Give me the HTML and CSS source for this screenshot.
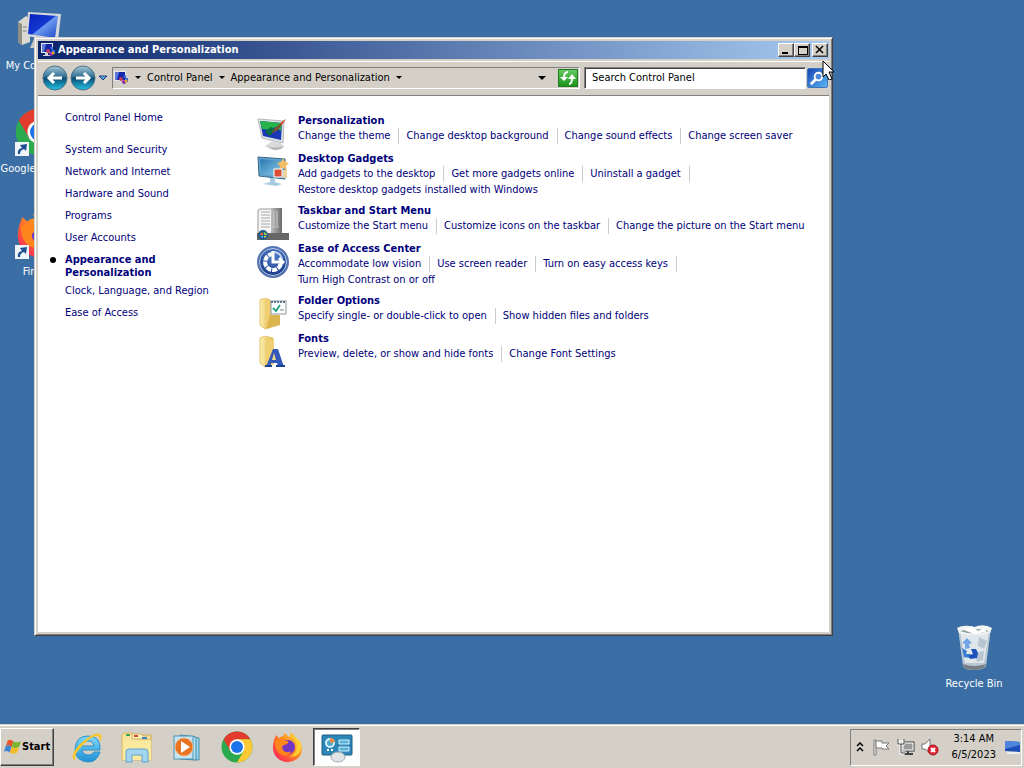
FILE: index.html
```html
<!DOCTYPE html>
<html lang="en">
<head>
<meta charset="utf-8">
<title>Appearance and Personalization</title>
<link rel="stylesheet" href="styles.css">
</head>
<body>
<svg class="defs" aria-hidden="true">
  <defs>
    <linearGradient id="screen" x1="0" y1="0" x2="1" y2="1"><stop offset="0" stop-color="#0a1fb8"/><stop offset=".48" stop-color="#1238d0"/><stop offset=".52" stop-color="#6b98ee"/><stop offset="1" stop-color="#1a49c8"/></linearGradient>
    <linearGradient id="orb" x1="0" y1="0" x2="0" y2="1"><stop offset="0" stop-color="#a9c8d6"/><stop offset=".45" stop-color="#2f6f93"/><stop offset=".5" stop-color="#0c4a72"/><stop offset="1" stop-color="#22c4e6"/></linearGradient>
    <linearGradient id="folder" x1="0" y1="0" x2="1" y2="0"><stop offset="0" stop-color="#fdf0b0"/><stop offset="1" stop-color="#e3bd55"/></linearGradient>
    <linearGradient id="sky" x1="0" y1="0" x2="1" y2="1"><stop offset="0" stop-color="#2a78b0"/><stop offset="1" stop-color="#8fd0ee"/></linearGradient>
    <linearGradient id="fox" x1="1" y1="0" x2="0" y2="1"><stop offset="0" stop-color="#ffe84a"/><stop offset=".45" stop-color="#ff8a1f"/><stop offset=".8" stop-color="#ff3a4c"/><stop offset="1" stop-color="#e0167c"/></linearGradient>
    <linearGradient id="ie" x1="0" y1="0" x2="0" y2="1"><stop offset="0" stop-color="#7fd9fb"/><stop offset="1" stop-color="#1f8fd6"/></linearGradient>
    <linearGradient id="grey" x1="0" y1="0" x2="1" y2="0"><stop offset="0" stop-color="#bdbdbd"/><stop offset="1" stop-color="#6a6a6a"/></linearGradient>
    <radialGradient id="access" cx=".5" cy=".3" r=".7"><stop offset="0" stop-color="#5580cc"/><stop offset="1" stop-color="#123582"/></radialGradient>
    <symbol id="chrome" viewBox="0 0 32 32">
      <circle cx="16" cy="16" r="15.500" fill="#2da94f"/>
      <path d="M2.600 8.250A15.500 15.500 0 0 1 29.400 8.250L16 8.250L9.300 19.900Z" fill="#e33b2e"/>
      <path d="M29.400 8.250A15.500 15.500 0 0 1 16 31.500L22.700 19.900L16 8.250Z" fill="#fcc934"/>
      <circle cx="16" cy="16" r="7.700" fill="#fff"/><circle cx="16" cy="16" r="6" fill="#1a73e8"/>
    </symbol>
    <symbol id="firefox" viewBox="0 0 32 32">
      <path d="M3 9L5 4L8 7Q10 5 13 5L12 2Q16 3 18 6Q20 4 19 1Q24 4 26 8Q29 9 30 13Q33 22 26 28Q18 34 9 29Q-1 23 3 9Z" fill="url(#fox)"/>
      <circle cx="17" cy="16" r="7" fill="#7236c4"/>
      <path d="M4 10Q9 7 13 10L17 10Q18 13 13 14Q10 15 12 19Q15 23 20 20Q17 26 11 24Q4 21 4 10Z" fill="#ff861c"/>
      <path d="M19 4Q28 10 25 20Q22 25 18 26Q31 26 30 13Q27 7 19 4Z" fill="#ffcf35"/>
    </symbol>
    <symbol id="shortcut" viewBox="0 0 14 14">
      <rect width="14" height="14" fill="#eef4fa"/><path d="M3 12Q2 7 7 6L5 3L12 2L11 9L9 7Q5 8 5 12Z" fill="#1d4f91"/>
    </symbol>
    <symbol id="panel" viewBox="0 0 16 16">
      <rect x="1" y="1" width="12" height="10" fill="#e7e9ef"/><rect x="2" y="2" width="10" height="8" fill="#1427a4"/><path d="M2 2H6L4 10H2Z" fill="#5a79dc"/>
      <path d="M5 11H8V13H11V14H3V13H5Z" fill="#d2d4da"/><circle cx="8" cy="9" r="2" fill="#c03a5a"/><circle cx="11" cy="12" r="2" fill="#8a2bb0"/><path d="M10 5H13V8H15V12H13L12 9Z" fill="#3b67de"/><circle cx="13" cy="11" r="1.500" fill="#e6a91e"/>
    </symbol>
  </defs>
</svg>

<main class="desktop">
  <div class="shortcuts">
    <button class="shortcut">
      <svg class="shortcut-icon" viewBox="0 0 48 48"><path d="M3 17L11 11L15 14V37L7 40L3 37Z" fill="#dcdad0"/><path d="M3 17L7 19V40L3 37Z" fill="#8f8f88"/><path d="M8 22H13M8 26H13" stroke="#777"/><path d="M13 7L46 9L43 36L11 31Z" fill="#d5d8dc"/><path d="M15 9L43 11L40 33L13 29Z" fill="url(#screen)"/><path d="M19 34L30 36L33 43H15Z" fill="#c8c9c6"/></svg>
      <span>My Computer</span>
    </button>
    <button class="shortcut">
      <span class="badged"><svg class="shortcut-icon" viewBox="0 0 48 48"><use href="#chrome" width="48" height="48"/></svg><svg class="badge"><use href="#shortcut"/></svg></span>
      <span>Google Chrome</span>
    </button>
    <button class="shortcut">
      <span class="badged"><svg class="shortcut-icon" viewBox="0 0 48 48"><use href="#firefox" width="48" height="48"/></svg><svg class="badge"><use href="#shortcut"/></svg></span>
      <span>Firefox</span>
    </button>
  </div>

  <button class="shortcut bin">
    <svg class="shortcut-icon" viewBox="0 0 48 48"><path d="M8 5L41 5L36 43Q34 47 24 47Q14 47 13 43Z" fill="#b9c7d2"/><path d="M10 8L39 8L34 40H15Z" fill="#dfe7ed"/><path d="M7 5Q14 1 24 4Q34 0 42 5L40 10Q24 14 9 10Z" fill="#f1f5f4"/><path d="M10 8Q24 4 39 8Q24 13 10 8Z" fill="#8f9d9f"/><path d="M14 7L22 3L28 8L35 5L36 9L24 11Z" fill="#fff"/><path d="M29 14L37 18L34 26L28 23ZM24 30L34 28L33 37L27 39Z" fill="#b7c6d0"/><path d="M12 20L17 15L22 20L19 21L20 25L15 26L15 21Z" fill="#73a5e2"/><path d="M12 25L17 28L16 31L20 31V35L14 34Z" fill="#387acf"/><path d="M21 26L26 26L28 30L27 35L20 36L19 32L23 31Z" fill="#1c51bb"/><path d="M13 41Q24 45 36 41L34 45Q24 49 14 45Z" fill="#777f84"/></svg>
    <span>Recycle Bin</span>
  </button>

  <section class="window" aria-label="Appearance and Personalization">
    <header class="titlebar">
      <svg class="small-icon"><use href="#panel"/></svg>
      <h1>Appearance and Personalization</h1>
      <div class="caption-buttons">
        <button aria-label="Minimize"><svg viewBox="0 0 12 10"><path d="M2 8H8" stroke="#000" stroke-width="2"/></svg></button>
        <button aria-label="Maximize"><svg viewBox="0 0 12 10"><path d="M2 1H11V9H2ZM2 2H11" fill="none" stroke="#000" shape-rendering="crispEdges"/></svg></button>
        <button class="close" aria-label="Close"><svg viewBox="0 0 12 10"><path d="M2 1L9 8M9 1L2 8" stroke="#000" stroke-width="1.500"/></svg></button>
      </div>
    </header>

    <nav class="toolbar" aria-label="Location">
      <div class="history">
        <button aria-label="Back"><svg class="orb" viewBox="0 0 26 26"><circle cx="13" cy="13" r="12" fill="url(#orb)" stroke="#4d7184"/><path d="M20 13H7M12 8L7 13L12 18" fill="none" stroke="#fff" stroke-width="3"/></svg></button>
        <button aria-label="Forward"><svg class="orb" viewBox="0 0 26 26"><circle cx="13" cy="13" r="12" fill="url(#orb)" stroke="#4d7184"/><path d="M6 13H19M14 8L19 13L14 18" fill="none" stroke="#fff" stroke-width="3"/></svg></button>
        <button aria-label="Recent pages"><svg class="recent" viewBox="0 0 10 8"><path d="M1 2H9L5 6Z" fill="#55a4dc" stroke="#203f7c"/></svg></button>
      </div>
      <div class="address">
        <svg class="small-icon"><use href="#panel"/></svg>
        <button class="crumb-arrow" aria-label="Locations"><i></i></button>
        <button class="crumb">Control Panel</button>
        <button class="crumb-arrow" aria-label="Control Panel items"><i></i></button>
        <button class="crumb">Appearance and Personalization</button>
        <button class="crumb-arrow" aria-label="Category items"><i></i></button>
        <button class="crumb-arrow history-list" aria-label="Previous locations"><i class="large"></i></button>
        <button class="refresh" aria-label="Refresh"><svg viewBox="0 0 18 16"><path d="M9 2Q5 2 5 8M10 14Q13 14 13 8" fill="none" stroke="#fff" stroke-width="2"/><path d="M1 7H9L5 11ZM9 9H17L13 4Z" fill="#fff"/></svg></button>
      </div>
      <div class="search">
        <input type="text" placeholder="Search Control Panel" aria-label="Search Control Panel">
        <button aria-label="Search"><svg viewBox="0 0 20 20"><circle cx="11" cy="8" r="4" fill="#4b86dd" stroke="#fff" stroke-width="2"/><path d="M8 11L3 16" stroke="#fff" stroke-width="3"/></svg></button>
      </div>
    </nav>

    <div class="content">
      <nav class="categories" aria-label="Categories">
        <a class="home" href="#">Control Panel Home</a>
        <a href="#">System and Security</a>
        <a href="#">Network and Internet</a>
        <a href="#">Hardware and Sound</a>
        <a href="#">Programs</a>
        <a href="#">User Accounts</a>
        <a class="current" href="#" aria-current="page">Appearance and Personalization</a>
        <a href="#">Clock, Language, and Region</a>
        <a href="#">Ease of Access</a>
      </nav>

      <div class="groups">
        <section class="group">
          <svg viewBox="0 0 32 32"><path d="M1 1L27 3L26 25L5 20Z" fill="#dfe2e3" stroke="#b4b8ba"/><path d="M3 3L25 5L24 22L6 18Z" fill="#1838b8"/><path d="M3 3L25 5L24 13L18 9L14 12L5 11Z" fill="#27b34a"/><path d="M8 14L14 9L18 11L13 18Z" fill="#0a6c42"/><path d="M29 1L18 10L14 16L21 12Z" fill="#80522d"/><path d="M29 1L23 5L25 7Z" fill="#df5039"/><path d="M16 23L22 24L27 28Q24 32 17 32L8 28Z" fill="#d9dadb"/><path d="M8 28Q18 31 27 28Q25 32 17 32Z" fill="#b5b7b9"/></svg>
          <div class="tasks"><h2><a href="#">Personalization</a></h2>
            <ul><li><a href="#">Change the theme</a></li><li><a href="#">Change desktop background</a></li><li><a href="#">Change sound effects</a></li><li><a href="#">Change screen saver</a></li></ul></div>
        </section>
        <section class="group">
          <svg viewBox="0 0 32 32"><path d="M1 1L28 3V23L2 20Z" fill="#63a3cc" stroke="#346b8b"/><path d="M3 3L26 5V20L4 18Z" fill="url(#sky)"/><path d="M13 22H18V26L25 28L19 30L6 28L13 26Z" fill="#a7cee0"/><path d="M26 2L28 6L32 7L29 10L30 14L26 12L22 14L23 10L20 7L24 6Z" fill="#f3bd63"/><rect x="17" y="13" width="8" height="8" fill="#da4d32" stroke="#fff"/><rect x="26" y="14" width="4" height="8" fill="#ead5a1"/></svg>
          <div class="tasks"><h2><a href="#">Desktop Gadgets</a></h2>
            <ul><li><a href="#">Add gadgets to the desktop</a></li><li><a href="#">Get more gadgets online</a></li><li><a href="#">Uninstall a gadget</a></li><li><a href="#">Restore desktop gadgets installed with Windows</a></li></ul></div>
        </section>
        <section class="group">
          <svg viewBox="0 0 32 32"><rect x="1" y="1" width="15" height="25" rx="2" fill="#f5f5f5" stroke="#999"/><path d="M4 4H13M4 7H13M4 10H13M4 13H13M4 16H13M4 19H13" stroke="#aaa"/><rect x="14" width="11" height="26" fill="url(#grey)"/><path d="M17 3V18M20 3V18M15 19H22" stroke="#ccc"/><rect y="25" width="32" height="7" fill="#666"/><circle cx="6" cy="27" r="5" fill="#1d5989"/><path d="M3 26L6 24V27H3Z" fill="#ef6533"/><path d="M7 24L10 26V27H7Z" fill="#9fcf45"/><path d="M3 28H6V30Z" fill="#5bc0f0"/><path d="M7 28H10L7 30Z" fill="#ffd34d"/></svg>
          <div class="tasks"><h2><a href="#">Taskbar and Start Menu</a></h2>
            <ul><li><a href="#">Customize the Start menu</a></li><li><a href="#">Customize icons on the taskbar</a></li><li><a href="#">Change the picture on the Start menu</a></li></ul></div>
        </section>
        <section class="group">
          <svg viewBox="0 0 32 32"><circle cx="16" cy="16" r="15" fill="url(#access)" stroke="#5474b0" stroke-width="2"/><circle cx="16" cy="16" r="13.500" fill="none" stroke="#c2d2ef"/><path d="M16 8A8 8 0 1 0 24 17" fill="none" stroke="#fff" stroke-width="4" stroke-dasharray="5 1"/><path d="M17 6A9 9 0 0 1 25 13" fill="none" stroke="#b9cdf0" stroke-width="2"/><path d="M16 5V16H26M22 12L26 16L22 20" fill="none" stroke="#fff" stroke-width="3"/></svg>
          <div class="tasks"><h2><a href="#">Ease of Access Center</a></h2>
            <ul><li><a href="#">Accommodate low vision</a></li><li><a href="#">Use screen reader</a></li><li><a href="#">Turn on easy access keys</a></li><li><a href="#">Turn High Contrast on or off</a></li></ul></div>
        </section>
        <section class="group">
          <svg viewBox="0 0 32 32"><path d="M3 2L8 0L13 2V28L8 31L3 27Z" fill="url(#folder)" stroke="#e0c56e"/><path d="M8 2L14 4V30L8 31Z" fill="#efcf72"/><path d="M13 17H23V27L9 31Z" fill="#ddb54f"/><rect x="14" y="3" width="15" height="13" fill="#fff" stroke="#8b969f"/><path d="M14 4H29" stroke="#607b8f" stroke-width="2" stroke-dasharray="2 1"/><path d="M16 10L19 13L23 7" fill="none" stroke="#26a383" stroke-width="2"/><path d="M23 12H27" stroke="#888"/></svg>
          <div class="tasks"><h2><a href="#">Folder Options</a></h2>
            <ul><li><a href="#">Specify single- or double-click to open</a></li><li><a href="#">Show hidden files and folders</a></li></ul></div>
        </section>
        <section class="group">
          <svg viewBox="0 0 32 32"><path d="M3 2L8 0L16 2V28L8 31L3 27Z" fill="url(#folder)" stroke="#e0c56e"/><path d="M8 2L17 4V28L8 31Z" fill="#efcf72"/><path d="M16 13H21L27 31H21L20 27H14L13 31H9Z" fill="#3559b8"/><path d="M17 17L15 24H19Z" fill="#f1d889"/><path d="M8 30H15M19 30H28" stroke="#1c3f98" stroke-width="2"/></svg>
          <div class="tasks"><h2><a href="#">Fonts</a></h2>
            <ul><li><a href="#">Preview, delete, or show and hide fonts</a></li><li><a href="#">Change Font Settings</a></li></ul></div>
        </section>
      </div>
    </div>
  </section>
  <svg class="cursor" viewBox="0 0 12 20" aria-hidden="true"><path d="M1 1V17L4 14L7 20L10 19L7 12H12Z" fill="#fff" stroke="#000"/></svg>
</main>

<footer class="taskbar">
  <button class="start"><svg viewBox="0 0 18 18"><path d="M4 2Q7 0 10 3L8 9Q5 6 2 8Z" fill="#e9552b"/><path d="M10 3Q13 5 18 3L16 9Q12 11 8 9Z" fill="#7db532"/><path d="M2 8Q5 6 8 9L6 15Q4 12 0 14Z" fill="#3f83d8"/><path d="M8 9Q12 11 16 9L14 15Q10 17 6 15Z" fill="#f6bd2a"/></svg>Start</button>
  <div class="apps">
    <button aria-label="Internet Explorer"><svg viewBox="0 0 32 32"><path d="M29 19H11Q12 24 18 24Q21 24 23 21H29Q26 31 17 31Q4 30 4 18Q5 5 17 5Q30 5 29 19ZM11 15H23Q22 10 17 10Q12 10 11 15Z" fill="url(#ie)" stroke="#2d91c6"/><path d="M3 29Q-2 25 9 13Q23 0 29 3Q33 5 28 12Q30 5 26 5Q20 5 10 16Q1 27 5 27Z" fill="#f7c52c"/></svg></button>
    <button aria-label="Windows Explorer"><svg viewBox="0 0 32 32"><path d="M1 4L3 2H10L12 4H30V29H1Z" fill="#f8e49c" stroke="#d9b75c"/><path d="M11 3H20L22 5H30V8H11Z" fill="#fff3b8" stroke="#cfb061"/><path d="M5 4H9" stroke="#39a35b" stroke-width="2"/><path d="M13 5H17" stroke="#d14a37" stroke-width="2"/><path d="M21 7H26" stroke="#4284bd" stroke-width="2"/><path d="M2 10H30V29H2Z" fill="#fae99f"/><path d="M5 31V21Q5 18 8 18H24Q27 18 27 21V31H21V24H11V31Z" fill="#a3d5ef" stroke="#5da4cf"/></svg></button>
    <button aria-label="Windows Media Player"><svg viewBox="0 0 32 32"><path d="M14 5L28 7V29L14 28Z" fill="#9bd7ef" stroke="#438baa"/><path d="M9 4L25 6V29L9 28Z" fill="#b6e0ee" stroke="#438baa"/><rect x="3" y="5" width="19" height="23" fill="#c5e5f1" stroke="#4a94b5"/><circle cx="13" cy="16" r="9" fill="#e87424" stroke="#f7b27c"/><path d="M10 10L19 16L10 22Z" fill="#fff"/></svg></button>
    <button aria-label="Google Chrome"><svg><use href="#chrome"/></svg></button>
    <button aria-label="Firefox"><svg><use href="#firefox"/></svg></button>
    <button class="active" aria-label="Control Panel"><svg viewBox="0 0 32 32"><rect x="1" y="4" width="30" height="20" rx="1" fill="#2c86b8" stroke="#1e5d84"/><circle cx="9" cy="12" r="4" fill="#4ba7d2" stroke="#d8f0fb" stroke-width="2"/><path d="M9 12V7Q13 7 14 11Z" fill="#f08b3c"/><path d="M18 9H28V13H18ZM18 16H28V20H18Z" fill="#56b2d9" stroke="#d8f0fb"/><path d="M6 19H8M10 19H12" stroke="#fff" stroke-width="2"/><ellipse cx="17" cy="26" rx="7" ry="5" fill="#e1e5e6" stroke="#9fa9ad"/></svg></button>
  </div>
  <div class="tray">
    <button aria-label="Show hidden icons"><svg class="chevrons" viewBox="0 0 8 10"><path d="M1 4L4 1L7 4M1 9L4 6L7 9" fill="none" stroke="#000" stroke-width="1.500"/></svg></button>
    <button aria-label="Action Center"><svg viewBox="0 0 18 18"><path d="M1 2H3V17H1Z" fill="#fff" stroke="#777"/><path d="M3 3H9V5H16L13 8L16 11H9V10H3Z" fill="#fff" stroke="#777"/></svg></button>
    <button aria-label="Network"><svg viewBox="0 0 18 18"><rect x="5" y="4" width="12" height="9" fill="#9a9a9a" stroke="#333"/><rect x="6" y="5" width="10" height="7" fill="none" stroke="#fff"/><path d="M11 13V16M7 16H16" stroke="#444" stroke-width="2"/><path d="M2 2V6H6V2M4 6V15H8" fill="none" stroke="#fff" stroke-width="3"/><path d="M1 1V6H7V1M4 6V15H8" fill="none" stroke="#444"/></svg></button>
    <button aria-label="Volume muted"><svg viewBox="0 0 18 18"><path d="M1 6H4L9 1V15L4 11H1Z" fill="#fff" stroke="#777"/><circle cx="12" cy="12" r="5" fill="#dc2633" stroke="#a9131f"/><path d="M10 10L14 14M14 10L10 14" stroke="#fff" stroke-width="2"/></svg></button>
    <time datetime="2023-06-05T03:14">3:14 AM<br>6/5/2023</time>
    <button class="show-desktop" aria-label="Show desktop"><svg viewBox="0 0 16 16"><path d="M1 2L16 3V13L1 12Z" fill="#1c50b8"/><path d="M1 2L16 3V6L1 10Z" fill="#4d86dc"/><path d="M3 14H16" stroke="#eee" stroke-width="2"/></svg></button>
  </div>
</footer>
</body>
</html>
```
FILE: styles.css
```css
* { box-sizing: border-box; }

body {
  display: flex;
  flex-direction: column;
  height: 100vh;
  margin: 0;
  overflow: hidden;
  background: #3a6ea5;
  color: #000;
  font: 11px/14px Tahoma, "DejaVu Sans Condensed", "Noto Sans", sans-serif;
}

button {
  margin: 0;
  padding: 0;
  border: 0;
  background: none;
  color: inherit;
  font: inherit;
}

svg { display: block; }
a { color: #00007a; text-decoration: none; }
a:hover { text-decoration: underline; }
h1, h2, ul { margin: 0; padding: 0; font-size: inherit; }
.defs { position: absolute; width: 0; height: 0; }

/* Desktop */
.desktop { position: relative; flex: 1; min-height: 0; }

.shortcuts {
  display: flex;
  flex-direction: column;
  gap: 35px;
  width: 78px;
  padding-top: 5px;
}

.shortcut {
  display: flex;
  flex-direction: column;
  align-items: center;
  gap: 6px;
  color: #fff;
  white-space: nowrap;
}

.shortcut-icon { width: 48px; height: 48px; }
.badged { position: relative; }
.badge { position: absolute; bottom: 0; left: 0; width: 14px; height: 14px; }
.bin { position: absolute; right: 12px; bottom: 33px; width: 76px; }

/* Window */
.window {
  position: absolute;
  inset: 37px 191px 88px 34px;
  display: flex;
  flex-direction: column;
  padding: 2px;
  border: 1px solid;
  border-color: #d4d0c8 #404040 #404040 #d4d0c8;
  background: #d4d0c8;
  box-shadow: inset 1px 1px #fff, inset -1px -1px #808080;
}

.titlebar {
  display: flex;
  align-items: center;
  gap: 2px;
  height: 18px;
  margin: 1px 1px 2px;
  padding: 0 1px 0 2px;
  background: linear-gradient(90deg, #0a246a, #a6caf0);
  color: #fff;
}

.titlebar h1 { flex: 1; }
.small-icon { width: 16px; height: 16px; }
.caption-buttons { display: flex; }

.caption-buttons button {
  width: 16px;
  height: 14px;
  padding: 1px;
  border: 1px solid;
  border-color: #fff #404040 #404040 #fff;
  background: #d4d0c8;
  box-shadow: inset -1px -1px #808080;
}

.caption-buttons svg { width: 12px; height: 10px; }
.caption-buttons .close { margin-left: 2px; }

.toolbar {
  display: flex;
  align-items: center;
  gap: 4px;
  height: 35px;
  margin: 0 1px;
  padding: 0 1px 2px 4px;
  border-top: 1px solid #fff;
  border-bottom: 1px solid #808080;
}

.history { display: flex; align-items: center; gap: 2px; }
.orb { width: 26px; height: 26px; }
.recent { width: 10px; height: 8px; }

.address {
  display: flex;
  flex: 1;
  align-items: center;
  height: 22px;
  border: 1px solid;
  border-color: #808080 #fff #fff #808080;
}

.crumb-arrow { width: 18px; height: 18px; }

.crumb-arrow i {
  display: block;
  width: 0;
  margin: 0 auto;
  border: 3px solid transparent;
  border-top-color: #000;
  border-bottom: 0;
}

.crumb-arrow .large { border-width: 4px 4px 0; }
.history-list { margin-left: auto; }

.refresh {
  width: 20px;
  height: 18px;
  margin-left: 7px;
  margin-right: 1px;
  border: 1px solid #237a23;
  background: linear-gradient(#63c963, #1b951b);
}

.search { display: flex; align-items: center; gap: 1px; }

.search input {
  width: 222px;
  height: 22px;
  padding: 0 7px;
  border: 1px solid;
  border-color: #808080 #fff #fff #808080;
  background: #fff;
  box-shadow: inset 1px 1px #404040;
  font: inherit;
}

.search input::placeholder { color: #000; opacity: 1; }

.search button {
  width: 21px;
  height: 20px;
  border: 1px solid #4076b9;
  border-radius: 2px;
  background: linear-gradient(135deg, #1645b4, #5cb7f2);
}

/* Content */
.content {
  display: flex;
  flex: 1;
  min-height: 0;
  margin: 0 1px 1px;
  background: #fff;
}

.categories {
  display: flex;
  flex-direction: column;
  align-items: flex-start;
  gap: 8px;
  width: 219px;
  padding: 15px 44px 0 27px;
}

.categories a { white-space: nowrap; }
.categories .home { margin-bottom: 10px; }

.categories .current {
  position: relative;
  margin-bottom: -3px;
  font-weight: bold;
  line-height: 13px;
  white-space: normal;
}

.current::before {
  content: "";
  position: absolute;
  top: 4px;
  left: -15px;
  width: 6px;
  height: 6px;
  border-radius: 50%;
  background: #000;
}

.groups {
  display: flex;
  flex: 1;
  flex-direction: column;
  gap: 6px;
  padding: 18px 20px 0 0;
}

.group { display: flex; gap: 9px; }
.group > svg { flex: none; width: 32px; height: 32px; margin-top: 4px; margin-bottom: -4px; }
.tasks { flex: 1; }
.tasks ul { display: flex; flex-wrap: wrap; list-style: none; line-height: 16px; }
.tasks li { white-space: nowrap; }

.tasks li:not(:last-child) {
  margin-right: 7px;
  padding-right: 8px;
  border-right: 1px solid #ccc;
}

.cursor { position: absolute; top: 60px; left: 822px; width: 12px; height: 20px; }

/* Taskbar */
.taskbar {
  display: flex;
  align-items: center;
  height: 44px;
  padding: 1px 2px 0 0;
  border-top: 1px solid #d4d0c8;
  background: #d4d0c8;
  box-shadow: inset 0 1px #fff;
}

.start {
  display: flex;
  align-items: center;
  gap: 1px;
  width: 54px;
  height: 38px;
  padding-left: 3px;
  border: 1px solid;
  border-color: #fff #404040 #404040 #fff;
  box-shadow: inset -1px -1px #808080;
  font-weight: bold;
}

.start svg { width: 17px; height: 18px; }
.apps { display: flex; flex: 1; gap: 3px; padding-left: 9px; }
.apps button { display: grid; place-items: center; width: 47px; height: 38px; }
.apps svg { width: 32px; height: 32px; }

.apps .active {
  border: 1px solid;
  border-color: #404040 #fff #fff #404040;
  background: #fff;
  box-shadow: inset 1px 1px #808080;
}

.tray {
  display: flex;
  align-items: center;
  gap: 6px;
  height: 37px;
  padding: 0 1px 0 5px;
  border: 1px solid;
  border-color: #808080 #fff #fff #808080;
}

.tray svg { width: 18px; height: 18px; }
.tray .chevrons { width: 8px; height: 10px; margin-right: 3px; }
.tray time { margin: 0 2px 0 7px; line-height: 16px; text-align: center; }
.show-desktop svg { width: 16px; height: 16px; }
```
